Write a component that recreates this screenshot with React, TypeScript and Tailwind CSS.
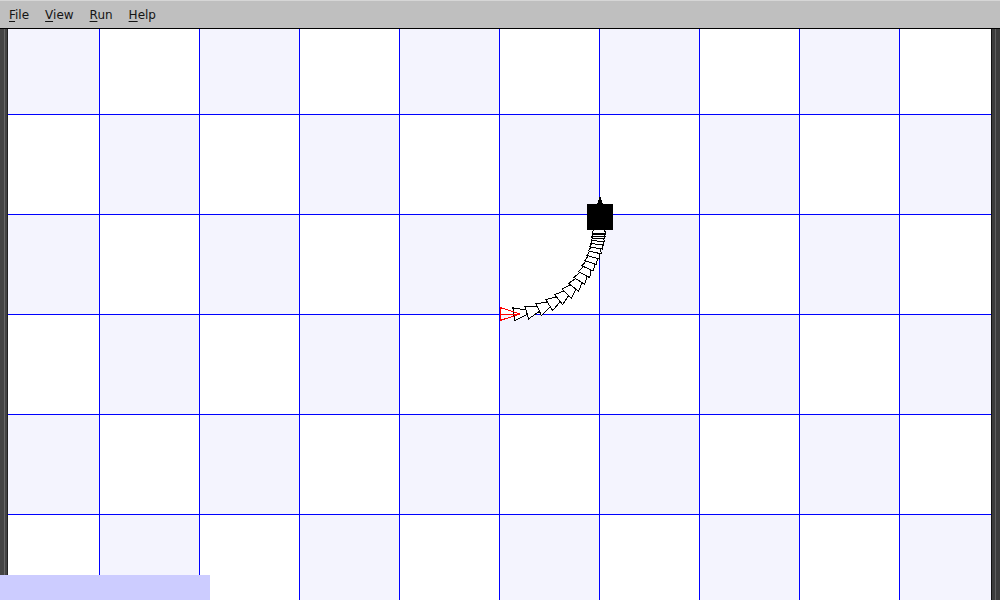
import React from "react";

const ROWS = [0, 1, 2, 3, 4, 5];
const COLS = [0, 1, 2, 3, 4, 5, 6, 7, 8, 9];

// turtle trail: quarter arc, heading east -> north
const CX = 509;
const CY = 224;
const R = 90;
const STEPS = 22;

function arrow(theta: number) {
  const x = CX + R * Math.sin(theta);
  const y = CY + R * Math.cos(theta);
  const hx = Math.cos(theta);
  const hy = -Math.sin(theta);
  const px = -hy;
  const py = hx;
  const tip = [x + hx * 11, y + hy * 11];
  const b1 = [x - hx * 9 + px * 6.5, y - hy * 9 + py * 6.5];
  const b2 = [x - hx * 9 - px * 6.5, y - hy * 9 - py * 6.5];
  return { pts: `${tip[0]},${tip[1]} ${b1[0]},${b1[1]} ${b2[0]},${b2[1]}`, tip, base: [x - hx * 9, y - hy * 9] };
}

function Canvas() {
  const trail = Array.from({ length: STEPS }, (_, i) => {
    const t = (i + 1) / STEPS;
    return arrow((Math.PI / 2) * (1 - Math.pow(1 - t, 2.2)));
  });
  const first = arrow(0);
  return (
    <svg width={983} height={571} viewBox="8 29 983 571" className="block" shapeRendering="crispEdges">
      {ROWS.map((r) =>
        COLS.map((c) => (
          <rect key={`${r}-${c}`} x={100 * c - 1} y={14 + 100 * r} width={100} height={100} fill={(r + c) % 2 === 0 ? "#f4f4fe" : "#ffffff"} />
        ))
      )}
      {COLS.map((c) => (
        <rect key={`v${c}`} x={99 + 100 * c} y={29} width={1} height={571} fill="#0000ff" />
      ))}
      {ROWS.map((r) => (
        <rect key={`h${r}`} x={8} y={114 + 100 * r} width={983} height={1} fill="#0000ff" />
      ))}
      {trail.map((a, i) => (
        <polygon key={i} points={a.pts} fill="#ffffff" stroke="#000000" strokeWidth={1} />
      ))}
      <polygon points={first.pts} fill="none" stroke="#ff0000" strokeWidth={1} />
      <line x1={first.base[0]} y1={first.base[1]} x2={first.tip[0]} y2={first.tip[1]} stroke="#ff0000" strokeWidth={1} />
      <rect x={587} y={204} width={26} height={26} fill="#000000" />
      <polygon points="597,204 603,204 600,196" fill="#000000" />
    </svg>
  );
}

function MenuItem({ label }: { label: string }) {
  return (
    <span className="px-2">
      <span className="underline underline-offset-2">{label[0]}</span>
      {label.slice(1)}
    </span>
  );
}

export default function App() {
  return (
    <div className="relative w-[1000px] h-[600px] overflow-hidden bg-white flex flex-col">
      <div className="h-[29px] shrink-0 bg-[#bfbfbf] border-t border-t-[#d6d6d6] border-b border-b-black flex items-center pl-px text-[12px] text-[#141414] font-['DejaVu_Sans',sans-serif]">
        <MenuItem label="File" />
        <MenuItem label="View" />
        <MenuItem label="Run" />
        <MenuItem label="Help" />
      </div>
      <div className="flex flex-1 min-h-0">
        <div className="w-[8px] shrink-0 flex">
          <div className="w-[4px] bg-[#444444]" />
          <div className="w-px bg-[#676767]" />
          <div className="w-[2px] bg-[#444444]" />
          <div className="w-px bg-[#222222]" />
        </div>
        <Canvas />
        <div className="w-[9px] shrink-0 flex">
          <div className="w-px bg-[#111111]" />
          <div className="w-[3px] bg-[#3c3c3c]" />
          <div className="w-px bg-[#5f5f5f]" />
          <div className="w-[4px] bg-[#3c3c3c]" />
        </div>
      </div>
      <div className="absolute left-0 bottom-0 w-[210px] h-[25px] bg-[#ccccff]" />
    </div>
  );
}
